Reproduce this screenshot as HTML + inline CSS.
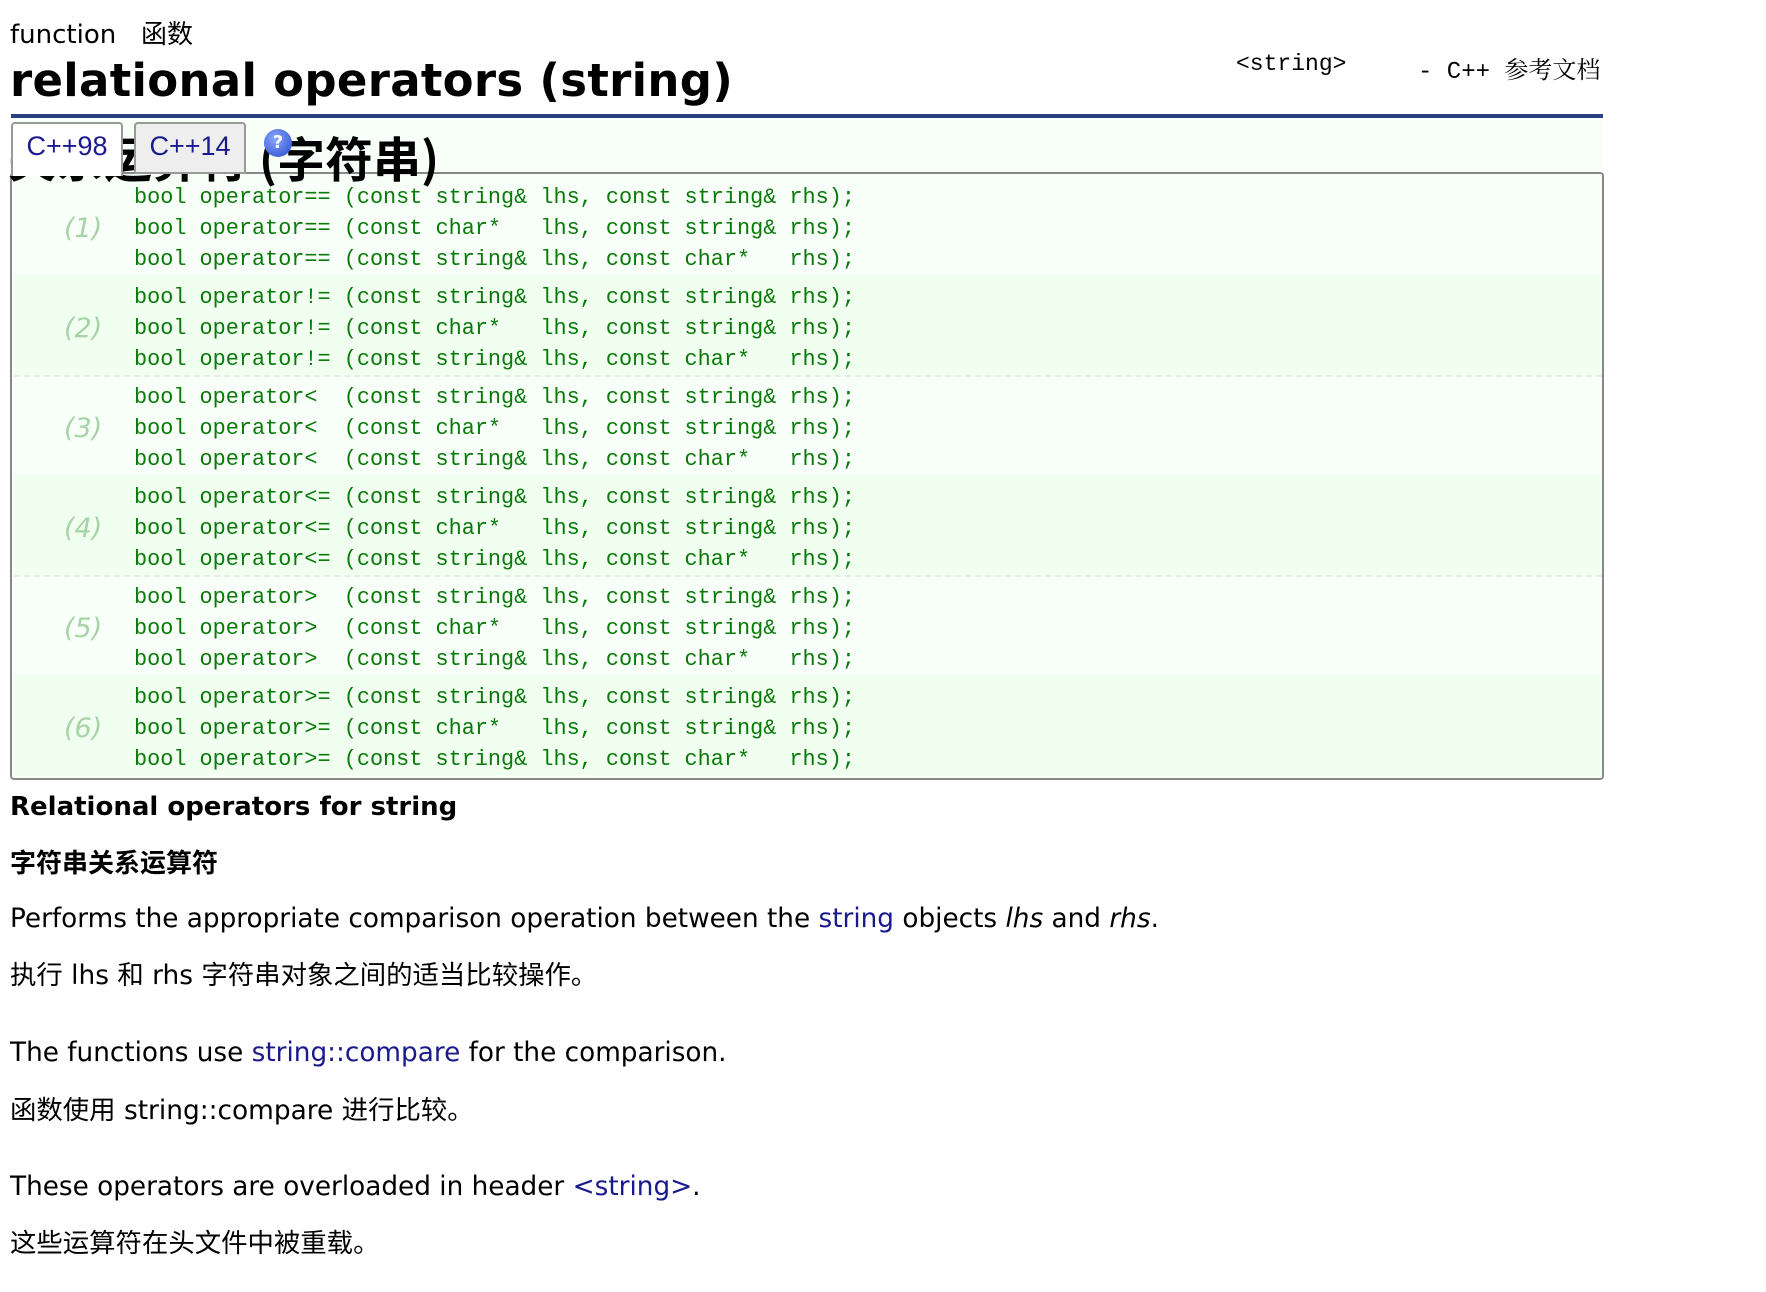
<!DOCTYPE html>
<html><head><meta charset="utf-8"><style>
body{margin:0;width:1766px;height:1292px;background:#fff;position:relative;overflow:hidden;font-family:"DejaVu Sans","Noto Sans CJK SC",sans-serif;color:#000}
.a{position:absolute;white-space:nowrap}
.code{font-family:"Liberation Mono","Noto Sans CJK SC",monospace;font-size:21.85px;color:#0a7a0a;white-space:pre;line-height:31px}
.grp{position:absolute;left:2px;width:1588px;height:100px;border-bottom:2px dashed #e6ece6}
.lbl{position:absolute;left:50px;top:38px;font-style:italic;font-size:27px;color:#a6d4a6}
.lines{position:absolute;left:120px;top:7px}
a{color:#1a1a8c;text-decoration:none}
</style></head><body>
<div class="a" style="left:10px;top:14px;font-size:26px">function&nbsp;&nbsp;&nbsp;函数</div>
<div class="a" style="left:10px;top:54px;font-size:45px;font-weight:bold;letter-spacing:0.3px">relational operators (string)</div>
<div class="a" style="left:1236px;top:51px;font-family:'Liberation Mono','Noto Serif CJK SC',monospace;font-size:23px">&lt;string&gt;</div>
<div class="a" style="left:1418px;top:50px;font-family:'Liberation Mono','Noto Serif CJK SC',monospace;font-size:24px">- C++ 参考文档</div>
<div class="a" style="left:11px;top:114px;width:1592px;height:4px;background:#2a4080"></div>
<div class="a" style="left:11px;top:118px;width:1592px;height:56px;background:#f8fff8"></div>
<div class="a" style="left:10px;top:172px;width:1590px;height:604px;border:2px solid #888;border-radius:4px;background:#f8fff8">
<div class="grp" style="top:1px"><div class="lbl">(1)</div><div class="lines code">bool operator== (const string&amp; lhs, const string&amp; rhs);
bool operator== (const char*   lhs, const string&amp; rhs);
bool operator== (const string&amp; lhs, const char*   rhs);</div></div>
<div class="grp" style="top:101px;background:#f0fff0"><div class="lbl">(2)</div><div class="lines code">bool operator!= (const string&amp; lhs, const string&amp; rhs);
bool operator!= (const char*   lhs, const string&amp; rhs);
bool operator!= (const string&amp; lhs, const char*   rhs);</div></div>
<div class="grp" style="top:201px"><div class="lbl">(3)</div><div class="lines code">bool operator&lt;  (const string&amp; lhs, const string&amp; rhs);
bool operator&lt;  (const char*   lhs, const string&amp; rhs);
bool operator&lt;  (const string&amp; lhs, const char*   rhs);</div></div>
<div class="grp" style="top:301px;background:#f0fff0"><div class="lbl">(4)</div><div class="lines code">bool operator&lt;= (const string&amp; lhs, const string&amp; rhs);
bool operator&lt;= (const char*   lhs, const string&amp; rhs);
bool operator&lt;= (const string&amp; lhs, const char*   rhs);</div></div>
<div class="grp" style="top:401px"><div class="lbl">(5)</div><div class="lines code">bool operator&gt;  (const string&amp; lhs, const string&amp; rhs);
bool operator&gt;  (const char*   lhs, const string&amp; rhs);
bool operator&gt;  (const string&amp; lhs, const char*   rhs);</div></div>
<div class="grp" style="top:501px;background:#f0fff0;border-bottom:none"><div class="lbl">(6)</div><div class="lines code">bool operator&gt;= (const string&amp; lhs, const string&amp; rhs);
bool operator&gt;= (const char*   lhs, const string&amp; rhs);
bool operator&gt;= (const string&amp; lhs, const char*   rhs);</div></div>
</div>
<div class="a" style="left:8px;top:124px;font-size:48px;font-weight:bold;font-family:'Noto Sans CJK SC',sans-serif;line-height:64px;z-index:2">关系运算符 (字符串)</div>
<div class="a" style="left:11px;top:122px;width:108px;height:52px;border:2px solid #999;border-bottom:none;border-radius:4px 4px 0 0;background:#fff;font-size:27px;color:#1a1a8c;text-align:center;line-height:44px;font-family:'Liberation Sans',sans-serif;z-index:3">C++98</div>
<div class="a" style="left:134px;top:122px;width:108px;height:48px;border:2px solid #999;border-radius:4px 4px 0 0;background:#eee;font-size:27px;color:#1a1a8c;text-align:center;line-height:44px;font-family:'Liberation Sans',sans-serif;z-index:3">C++14</div>
<div class="a" style="left:264px;top:129px;width:28px;height:28px;border-radius:50%;background:radial-gradient(circle at 40% 35%,#8aa8ff,#2246c8);color:#fff;font-size:18px;font-weight:bold;text-align:center;line-height:28px;z-index:3">?</div>
<div class="a" style="left:10px;top:792px;font-size:26px;font-weight:bold">Relational operators for string</div>
<div class="a" style="left:10px;top:843px;font-size:26px;font-weight:bold">字符串关系运算符</div>
<div class="a" style="left:10px;top:904px;font-size:26.3px">Performs the appropriate comparison operation between the <a>string</a> objects <i>lhs</i> and <i>rhs</i>.</div>
<div class="a" style="left:10px;top:953px;font-size:26.4px">执行 lhs 和 rhs 字符串对象之间的适当比较操作。</div>
<div class="a" style="left:10px;top:1038px;font-size:26.3px">The functions use <a>string::compare</a> for the comparison.</div>
<div class="a" style="left:10px;top:1088px;font-size:26.4px">函数使用 string::compare 进行比较。</div>
<div class="a" style="left:10px;top:1172px;font-size:26.3px">These operators are overloaded in header <a>&lt;string&gt;</a>.</div>
<div class="a" style="left:10px;top:1221px;font-size:26.4px">这些运算符在头文件中被重载。</div>
</body></html>
